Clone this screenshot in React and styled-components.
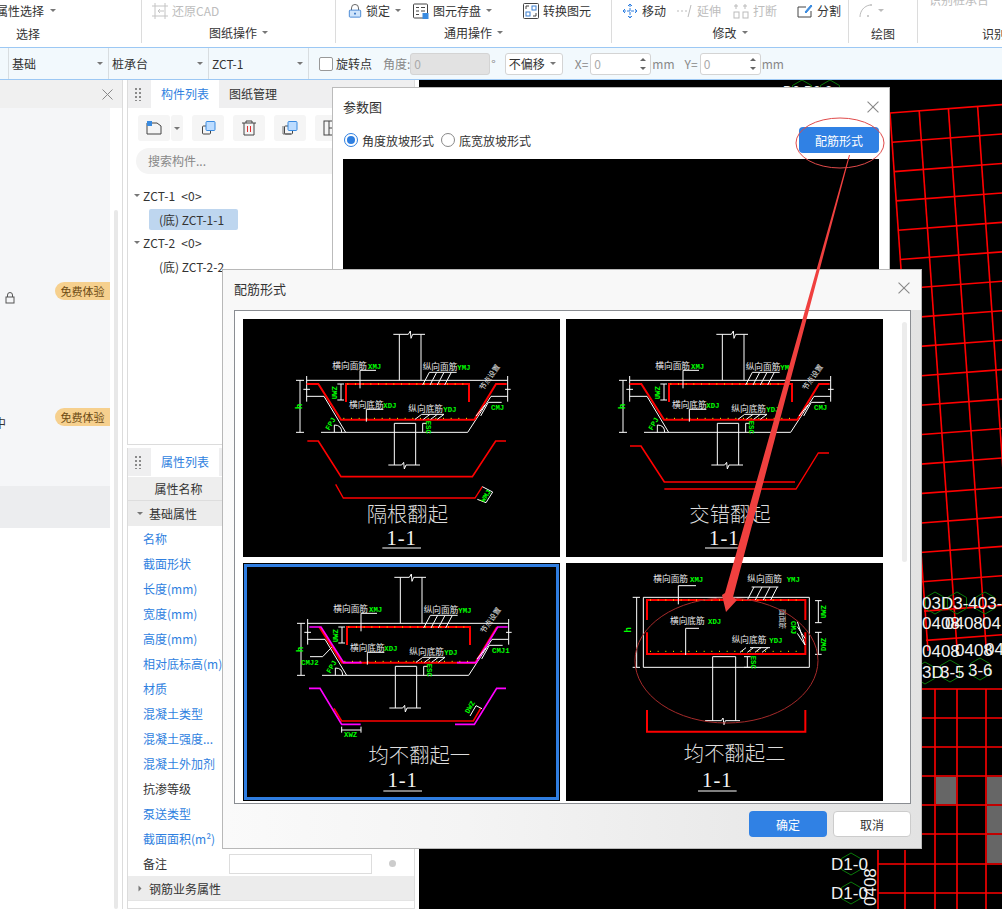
import React from 'react'
import styled, { createGlobalStyle } from 'styled-components'

const GlobalStyle = createGlobalStyle`
  html, body { margin: 0; padding: 0; background: #fff; }
  * { box-sizing: border-box; }
  body { font-family: "Noto Sans CJK SC", "Noto Sans", sans-serif; font-size: 12px; color: #333; }
`

const Page = styled.div`
  position: relative;
  width: 1002px;
  height: 909px;
  overflow: hidden;
  display: flex;
  flex-direction: column;
`

/* ribbon */
const Ribbon = styled.div`
  display: flex;
  height: 47px;
  background: #fff;
  flex: none;
`
const RibbonGroup = styled.div`
  width: ${(p) => p.$w}px;
  flex: none;
  position: relative;
  overflow: hidden;
  height: 43px;
  border-right: ${(p) => (p.$last ? 'none' : '1px solid #dcdcdc')};
  display: flex;
  flex-direction: column;
`
const RibbonRow = styled.div`
  display: flex;
  align-items: center;
  height: 21px;
  flex: none;
`
const Tool = styled.div`
  display: flex;
  align-items: center;
  gap: 4px;
  margin-left: ${(p) => p.$ml || 0}px;
  margin-top: ${(p) => p.$mt || 0}px;
  color: ${(p) => (p.$off ? '#bdbdbd' : '#333')};
  font-size: 12px;
  white-space: nowrap;
`
const GroupLabel = styled.div`
  display: flex;
  align-items: center;
  justify-content: ${(p) => (p.$left ? 'flex-start' : 'center')};
  gap: 5px;
  padding-left: ${(p) => p.$pl || 0}px;
  height: 22px;
  margin-top: ${(p) => p.$mt || 0}px;
  white-space: nowrap;
  color: #333;
`
const Caret = styled.span`
  display: inline-block;
  width: 0;
  height: 0;
  border-left: 3px solid transparent;
  border-right: 3px solid transparent;
  border-top: 3px solid ${(p) => p.$c || '#777'};
  margin-left: ${(p) => p.$ml || 0}px;
  flex: none;
`
const SideCaret = styled(Caret)`
  transform: rotate(-90deg);
`

/* property bar */
const PropBar = styled.div`
  display: flex;
  align-items: center;
  height: 33px;
  flex: none;
  background: #f2f9fd;
  border-top: 1px solid #9cc8f4;
  border-bottom: 1px solid #9cc8f4;
`
const PropCell = styled.div`
  width: ${(p) => p.$w}px;
  flex: none;
  height: 31px;
  display: flex;
  align-items: center;
  justify-content: space-between;
  padding: 0 5px 0 3px;
  border-right: 1px solid #d8dde0;
`
const Check = styled.span`
  width: 14px;
  height: 14px;
  border: 1px solid #999;
  border-radius: 2px;
  background: #fff;
  margin: 0 3px 0 10px;
  flex: none;
`
const PropText = styled.span`
  color: ${(p) => (p.$dim ? '#888' : '#333')};
  margin-left: ${(p) => p.$ml || 0}px;
  white-space: nowrap;
`
const PropInput = styled.div`
  width: ${(p) => p.$w}px;
  height: 22px;
  flex: none;
  border: 1px solid #d4d4d4;
  border-radius: 3px;
  background: ${(p) => (p.$off ? '#e2e2e2' : '#fff')};
  color: #aaa;
  padding-left: 3px;
  margin-left: ${(p) => p.$ml || 0}px;
  display: flex;
  align-items: center;
  justify-content: space-between;
`
const Spin = styled.div`
  display: flex;
  flex-direction: column;
  gap: 6px;
  padding-right: 4px;
`
const SpinUp = styled(Caret)`
  border-top: none;
  border-bottom: 3px solid #666;
`
const SelectBox = styled(PropInput)`
  color: #333;
  background: #fff;
  padding: 0 6px 0 3px;
`

/* work area */
const Work = styled.div`
  flex: 1;
  display: flex;
  min-height: 0;
`
const LeftColumn = styled.div`
  width: 123px;
  flex: none;
  border-right: 1px solid #dcdcdc;
  display: flex;
  flex-direction: column;
`
const LeftHead = styled.div`
  height: 28px;
  background: #f0f0f0;
  flex: none;
  display: flex;
  align-items: center;
  justify-content: flex-end;
  padding-right: 9px;
`
const LeftBody = styled.div`
  flex: 1;
  display: flex;
`
const LeftList = styled.div`
  width: 110px;
  flex: none;
  display: flex;
  flex-direction: column;
`
const LeftRow = styled.div`
  height: 42px;
  flex: none;
  display: flex;
  justify-content: space-between;
  background: ${(p) => (p.$hot ? '#ecedef' : '#f5f6f8')};
  padding-top: 6px;
`
const Badge = styled.span`
  width: 55px;
  height: 18px;
  margin-left: auto;
  background: #f6d08e;
  border-radius: 9px 0 0 9px;
  color: #6c4a12;
  font-size: 11px;
  line-height: 18px;
  text-align: center;
`
const LockMark = styled.span`
  margin: 8px 0 0 4px;
  width: 12px;
  height: 12px;
  flex: none;
`
const Cut = styled.span`
  margin: 6px 0 0 -6px;
`
const Gutter = styled.div`
  flex: 1;
  padding: 102px 4px 0 4px;
`
const Thumb = styled.div`
  height: 100%;
  width: 4px;
  background: #e8e8e8;
  border-radius: 2px;
`

const MiddleColumn = styled.div`
  width: 296px;
  flex: none;
  padding: 0 4px;
  display: flex;
  flex-direction: column;
  gap: 3px;
`
const Panel = styled.div`
  height: ${(p) => (p.$h ? `${p.$h}px` : 'auto')};
  flex: ${(p) => (p.$h ? 'none' : '1')};
  border: 1px solid #dcdcdc;
  border-top: none;
  background: #fff;
  overflow: hidden;
`
const TabBar = styled.div`
  height: 28px;
  background: #efeff0;
  display: flex;
  align-items: center;
  padding-left: 6px;
`
const Grip = styled.div`
  width: 7px;
  height: 14px;
  margin-right: 10px;
  background-image: radial-gradient(#8a8a8a 1px, transparent 1.2px);
  background-size: 4px 4px;
  flex: none;
`
const Tab = styled.div`
  width: ${(p) => (p.$on ? 68 : 48)}px;
  height: 28px;
  line-height: 28px;
  text-align: center;
  background: ${(p) => (p.$on ? '#fff' : 'transparent')};
  color: ${(p) => (p.$on ? '#2f7fe0' : '#333')};
  margin-left: ${(p) => p.$ml || 0}px;
`
const IconBar = styled.div`
  display: flex;
  padding: 7px 0 0 10px;
  gap: 9px;
`
const IconBtn = styled.div`
  width: ${(p) => p.$w || 32}px;
  height: 26px;
  background: #f5f5f5;
  border-radius: 3px;
  display: flex;
  align-items: center;
  justify-content: center;
  flex: none;
  margin-left: ${(p) => p.$ml || 0}px;
`
const Search = styled.div`
  margin: 7px 8px 0 8px;
  height: 26px;
  background: #f4f4f4;
  border-radius: 13px;
  padding-left: 12px;
  line-height: 26px;
  color: #888;
`
const Tree = styled.div`
  padding-top: 9px;
`
const TreeRow = styled.div`
  height: 24px;
  display: flex;
  align-items: center;
  gap: 3px;
  padding-left: 6px;
  letter-spacing: 0.2px;
`
const TreeLeaf = styled.div`
  height: 21px;
  line-height: 21px;
  width: ${(p) => p.$w}px;
  margin: 2px 0 0 21px;
  padding-left: 10px;
  border-radius: 2px;
  background: ${(p) => (p.$on ? '#bed6ef' : 'transparent')};
  white-space: pre;
`
const PropHead = styled.div`
  height: 24px;
  margin-top: 1px;
  width: 101px;
  background: #eee;
  text-align: center;
  line-height: 23px;
  border-bottom: 1px solid #ddd;
`
const SectionRow = styled.div`
  height: 25px;
  background: #ececec;
  display: flex;
  align-items: center;
  gap: 6px;
  padding-left: 9px;
  border-bottom: ${(p) => (p.$line ? '1px solid #e4e4e4' : 'none')};
`
const AttrRow = styled.div`
  height: 25px;
  display: flex;
  align-items: center;
  padding-left: 15px;
  color: ${(p) => (p.$blue ? '#2f7fe0' : '#333')};
  white-space: nowrap;
`
const AttrInput = styled.span`
  width: 143px;
  height: 20px;
  border: 1px solid #ddd;
  margin-left: 62px;
  flex: none;
`
const AttrDot = styled.span`
  width: 7px;
  height: 7px;
  border-radius: 50%;
  background: #ccc;
  margin-left: 17px;
  flex: none;
`
const Canvas = styled.div`
  flex: 1;
  background: #000;
  overflow: hidden;
`
const CanvasSvg = styled.svg`
  display: block;
  width: 583px;
  height: 830px;
`

/* dialogs */
const ParamDialog = styled.div`
  position: absolute;
  left: 332px;
  top: 87px;
  width: 558px;
  height: 600px;
  background: #fff;
  border: 1px solid #bbb;
  padding: 0 10px 0 10px;
`
const DialogHead = styled.div`
  height: ${(p) => p.$h}px;
  display: flex;
  align-items: center;
  justify-content: space-between;
  font-size: 13px;
`
const RadioLine = styled.div`
  display: flex;
  align-items: center;
  height: 30px;
  white-space: nowrap;
`
const Radio = styled.span`
  width: 14px;
  height: 14px;
  border-radius: 50%;
  border: 1px solid ${(p) => (p.$on ? '#2f7fe0' : '#888')};
  margin: ${(p) => p.$m};
  display: flex;
  align-items: center;
  justify-content: center;
  flex: none;
  &::after {
    content: '';
    width: 8px;
    height: 8px;
    border-radius: 50%;
    background: ${(p) => (p.$on ? '#2f7fe0' : 'transparent')};
  }
`
const Primary = styled.div`
  width: ${(p) => p.$w}px;
  height: 26px;
  background: #3081e4;
  color: #fff;
  border-radius: 4px;
  display: flex;
  align-items: center;
  justify-content: center;
  margin-left: ${(p) => p.$ml || 'auto'};
  flex: none;
`
const Blackboard = styled.div`
  height: 400px;
  background: #000;
  margin-top: 4px;
`
const FormDialog = styled.div`
  position: absolute;
  left: 222px;
  top: 269px;
  width: 700px;
  height: 580px;
  border: 1px solid #b8b8b8;
  background: linear-gradient(90deg, #fafafa 0%, #f4f4f4 35%, #e3e3e3 100%);
  display: flex;
  flex-direction: column;
`
const FormHead = styled(DialogHead)`
  background: #f8f8f8;
  padding: 0 11px 4px;
  flex: none;
`
const FormBody = styled.div`
  margin: 0 10px 0 11px;
  height: 494px;
  flex: none;
  background: #fff;
  border: 1px solid #8a8d92;
  display: flex;
  overflow: hidden;
`
const CardGrid = styled.div`
  display: grid;
  grid-template-columns: 317px 317px;
  grid-auto-rows: 238px;
  gap: 6px;
  padding: 8px 0 0 8px;
  flex: none;
  height: 100%;
  overflow: hidden;
`
const Card = styled.div`
  position: relative;
  background: #000;
  &::after {
    content: '';
    display: ${(p) => (p.$on ? 'block' : 'none')};
    position: absolute;
    inset: 1px;
    border: 3px solid #2f7de0;
  }
`
const CardSvg = styled.svg`
  display: block;
  width: 317px;
  height: 238px;
`
const ScrollTrack = styled.div`
  width: 5px;
  height: 240px;
  background: #ececec;
  border-radius: 3px;
  margin: 11px 0 0 19px;
  flex: none;
`
const FormFoot = styled.div`
  display: flex;
  justify-content: flex-end;
  gap: 6px;
  padding: 7px 10px 0 0;
`
const Ghost = styled.div`
  width: 78px;
  height: 26px;
  background: #fff;
  border: 1px solid #ccc;
  border-radius: 4px;
  display: flex;
  align-items: center;
  justify-content: center;
`
const Overlay = styled.svg`
  position: absolute;
  left: 0;
  top: 0;
  width: 1002px;
  height: 909px;
  pointer-events: none;
`

/* icons */
const Close = ({ size = 11, c = '#888' }) => (
  <svg width={size} height={size} viewBox="0 0 11 11">
    <path d="M.5.5l10 10M10.5.5l-10 10" stroke={c} fill="none" />
  </svg>
)
const Ico = ({ children, w = 16, h = 16 }) => (
  <svg width={w} height={h} viewBox="0 0 16 16" fill="none" stroke="#444" strokeWidth="1">
    {children}
  </svg>
)
const LockIcon = () => (
  <Ico w={14}>
    <path d="M4 7V4.5a4 4 0 0 1 8 0V7" stroke="#555" />
    <rect x="1.5" y="7" width="13" height="8" rx="1" fill="#cfe4fb" stroke="#3a7fd0" />
    <path d="M8 10v2" stroke="#2f6fc0" strokeWidth="2" />
  </Ico>
)
const SaveIcon = () => (
  <Ico>
    <rect x=".5" y="1" width="14" height="14" rx="1" />
    <path d="M3 4.5h3M8 4.5h4M3 8h3M8 8h4M3 11.5h3" />
    <rect x="9.5" y="10" width="6" height="6" fill="#3a8be0" stroke="none" />
  </Ico>
)
const ConvertIcon = () => (
  <Ico>
    <rect x=".5" y=".5" width="15" height="15" rx="1" />
    <rect x="3" y="9" width="4" height="4" stroke="#3a7fd0" />
    <rect x="9" y="3" width="4" height="4" stroke="#3a7fd0" />
    <path d="M3 6V3h3M13 10v3h-3" />
  </Ico>
)
const MoveIcon = () => (
  <Ico>
    <path d="M8 1v14M1 8h14M8 1L6 3M8 1l2 2M8 15l-2-2M8 15l2-2M1 8l2-2M1 8l2 2M15 8l-2-2M15 8l-2 2" stroke="#2f7fe0" strokeDasharray="3 1" />
  </Ico>
)
const ExtendIcon = () => (
  <Ico>
    <path d="M0 8h2M4 8h2M8 8h2M14 2l-3 12" stroke="#bbb" />
  </Ico>
)
const BreakIcon = () => (
  <Ico>
    <rect x="1" y="9" width="5" height="6" stroke="#bbb" />
    <rect x="10" y="9" width="5" height="6" stroke="#bbb" />
    <path d="M3 1v5M12 1v5M1 3h4M10 3h4" stroke="#bbb" />
  </Ico>
)
const SplitIcon = () => (
  <Ico>
    <path d="M9 4H1v10h13V8" />
    <path d="M8 9l6-7 1 1-6 7z" fill="#3a8be0" stroke="#3a8be0" />
  </Ico>
)
const ArcIcon = () => (
  <Ico>
    <path d="M2 14C2 8 6 3 12 2" stroke="#bbb" />
    <circle cx="13" cy="2" r="1" fill="#bbb" stroke="none" />
    <circle cx="10" cy="13" r="1" fill="#bbb" stroke="none" />
  </Ico>
)
const RestoreIcon = () => (
  <Ico>
    <path d="M3 0v16M0 3h16M13 0v16M0 13h16M6 8h6M6 8l2-2M6 8l2 2" stroke="#c4c4c4" />
  </Ico>
)
const NewDocIcon = () => (
  <Ico>
    <path d="M1 3h10l4 3v8H1z" />
    <rect x="1" y="1" width="5" height="5" fill="#3a8be0" stroke="none" />
  </Ico>
)
const LayerIcon = ({ stack }) => (
  <Ico>
    {stack && <path d="M1 6v8h8" stroke="#777" />}
    <rect x="2.5" y="6" width="8" height="8" rx="1" />
    <rect x="6" y="1.5" width="9" height="9" rx="1" fill="#bcdcff" stroke="#3a8be0" />
  </Ico>
)
const TrashIcon = () => (
  <Ico>
    <path d="M1 3h14M5 3V1h6v2M3 3v12h10V3" />
    <path d="M6.5 6v6M9.500 6v6" stroke="#e03030" />
  </Ico>
)
const PlanIcon = () => (
  <Ico>
    <rect x="1" y="1" width="14" height="14" />
    <path d="M6 1v14M6 8h9" />
  </Ico>
)

/* cad drawing helpers */
const RED = '#f00'
const MAG = '#f0f'
const GRN = '#0f0'
const CAD_FONT = '"Noto Sans CJK SC", sans-serif'

const Ln = ({ d, c = '#fff', w = 3 }) => <path d={d} fill="none" stroke={c} strokeWidth={w} />
const T = ({ x, y, c = '#e8e8e8', s = 26, r, children, f = CAD_FONT, a, wt, ls }) => (
  <text
    x={x}
    y={y}
    fill={c}
    fontSize={s}
    fontFamily={f}
    fontWeight={wt}
    letterSpacing={ls}
    textAnchor={a}
    transform={r ? `rotate(${r} ${x} ${y})` : undefined}
  >
    {children}
  </text>
)
const G = (props) => <T c={GRN} s={22} wt={700} f='"Liberation Mono", monospace' {...props} />
const Dots = ({ d }) => <path d={d} fill="none" stroke="#ff0" strokeWidth="3" strokeDasharray="3 20" />

const CardTitle = ({ cx, y, numX, numY, lineY, children }) => (
  <>
    <T x={cx} y={y} s={61} a="middle" c="#dcdcdc" wt={300}>{children}</T>
    <T x={numX} y={numY} s={62} a="middle" c="#f4f4f4" ls={3} f='"Liberation Serif", serif'>1-1</T>
    <Ln d={`M${numX - 58} ${lineY}H${numX + 58}`} />
  </>
)

// the footing section shared by three of the cards
const Footing = ({ dx, dy, magenta, cmj = 'CMJ' }) => (
  <g transform={`translate(${dx} ${dy})`}>
    <Ln d="M478 211V73M543 211V73M460 73H505l6-10 2 22 5-12H555" />
    <Ln d="M200 198V275M200 211H803M803 198V275M200 259H252L317 367M243 367H683L753 259M753 259H803" />
    <Ln d="M190 238H210M795 238H812" />
    <Ln d="M180 211V367M168 211H192M168 367H192" />
    <Ln d={magenta ? 'M235 222L303 329H703L768 222' : 'M200 222H235L303 329H703L768 222H800'} c={RED} w={6} />
    {magenta && <Ln d="M205 222H240L308 329H362M648 329H705L770 222H800" c={MAG} w={5} />}
    <Ln d="M318 276V222H687V276" c={RED} w={6} />
    <Dots d="M322 222H685" />
    <Dots d="M310 325H700" />
    <Ln d="M303 222V270M292 222H312M292 270H312" />
    <G x={292} y={268} r={-90}>UWZ</G>
    <G x={186} y={298} r={-90} s={28}>h</G>
    <T x={277} y={177}>横向面筋</T>
    <G x={384} y={177}>XMJ</G>
    <Ln d="M360 235V181H408" />
    <T x={548} y={180}>纵向面筋</T>
    <G x={652} y={180}>YMJ</G>
    <Ln d="M568 187H650M548 225L568 187M570 225L590 187M592 225L612 187M614 225L634 187" />
    <T x={327} y={293}>横向底筋</T>
    <G x={430} y={293}>XDJ</G>
    <Ln d="M379 335V298H430" />
    <T x={505} y={305}>纵向底筋</T>
    <G x={610} y={305}>YDJ</G>
    <Ln d="M545 313H612M525 328L545 313M550 328L570 313M572 328L592 313M592 328L612 313" />
    <Ln d="M463 465V340H527V465M445 465H485l6-8 2 20 5-12H540" />
    <Ln d="M548 340V367M548 340H560" />
    <G x={558} y={332} r={90}>ESC</G>
    <G x={268} y={362} r={-60}>FPJ</G>
    <Ln d="M283 367V345M283 345Q305 345 305 367" />
    <G x={753} y={301}>{cmj}</G>
    <Ln d="M745 277H785M722 318L745 277M708 318L735 285" />
    <T x={730} y={242} r={-55} s={22}>节点设置</T>
  </g>
)

const Card1 = () => (
  <CardSvg viewBox="9 27 951 714">
    <Footing dx={0} dy={0} />
    <Ln d="M202 393H235L303 500H697L767 393H798" c={RED} w={5} />
    <Ln d="M287 523L310 564H705L727 530" c={RED} w={4} />
    <Ln d="M727 530L758 546L738 578L712 568" />
    <G x={733} y={578} r={-58}>WMJ</G>
    <CardTitle cx={502} y={635} numX={485} numY={704} lineY={714}>隔根翻起</CardTitle>
  </CardSvg>
)
const Card2 = () => (
  <CardSvg viewBox="18 27 951 714">
    <Footing dx={9} dy={0} />
    <Ln d="M210 408H243L313 516H705" c={RED} w={5} />
    <Ln d="M313 537H708L775 429H807" c={RED} w={4} />
    <CardTitle cx={510} y={635} numX={493} numY={704} lineY={714}>交错翻起</CardTitle>
  </CardSvg>
)
const Card3 = () => (
  <CardSvg viewBox="9 9 951 714">
    <Footing dx={3} dy={-21} magenta cmj="CMJ1" />
    <G x={183} y={316}>CMJ2</G>
    <Ln d="M210 290H248L275 262" />
    <Ln d="M282 445L305 483H700L722 445" c={RED} w={5} />
    <Ln d="M207 385H240L305 493H362M645 493H703L770 385H798" c={MAG} w={5} />
    <Ln d="M305 500V518M363 500V518M305 510H363" />
    <G x={312} y={532}>XWZ</G>
    <G x={686} y={462} r={-60}>DWZ</G>
    <Ln d="M690 468L708 437L726 446" />
    <CardTitle cx={538} y={610} numX={488} numY={680} lineY={693}>均不翻起一</CardTitle>
  </CardSvg>
)
const Card4 = () => (
  <CardSvg viewBox="18 24 951 714">
    <Ln d="M250 127H748V337H250Z" />
    <Ln d="M261 195V135H736V195M261 232V297H736V232" c={RED} w={6} />
    <Dots d="M270 135H730" />
    <Dots d="M270 289H730" />
    <Ln d="M230 127V337M218 127H240M218 337H240" />
    <G x={212} y={233} r={-90} s={28}>h</G>
    <T x={280} y={80}>横向面筋</T>
    <G x={390} y={80}>XMJ</G>
    <Ln d="M355 148V92H408" />
    <T x={562} y={82}>纵向面筋</T>
    <G x={680} y={82}>YMJ</G>
    <Ln d="M575 96H655M562 135L582 96M586 135L606 96M610 135L630 96M632 135L652 96" />
    <T x={330} y={208}>横向底筋</T>
    <G x={444} y={208}>XDJ</G>
    <Ln d="M377 300V220H417" />
    <T x={515} y={265}>纵向底筋</T>
    <G x={628} y={265}>YDJ</G>
    <Ln d="M570 278H630M540 292L558 278M562 292L580 278M585 292L603 278M606 292L624 278" />
    <T x={660} y={162} r={90} s={20}>面面筋</T>
    <G x={692} y={198} r={90}>CMJ</G>
    <Ln d="M712 200L735 270M712 215L735 250M712 235L735 270" />
    <Ln d="M458 497V305H527V497M435 497H484l5-8 3 20 4-12H540" />
    <Ln d="M562 305V337M552 305H572M552 337H572" />
    <G x={574} y={302} r={90}>ESC</G>
    <Ln d="M775 137V203M765 137H785M765 203H785M775 232V298M765 232H785M765 298H785" />
    <G x={797} y={190} r={-90}>UWZ</G>
    <G x={797} y={288} r={-90}>DWZ</G>
    <Ln d="M261 465V530H736V465" c={RED} w={6} />
    <CardTitle cx={524} y={617} numX={472} numY={695} lineY={708}>均不翻起二</CardTitle>
  </CardSvg>
)

/* background model on the canvas */
const skewRows = Array.from({ length: 19 }, (_, i) => i)
const skewCols = Array.from({ length: 5 }, (_, i) => i)
const gridX = [878, 905, 935, 957, 986]
const gridY = [688, 717, 746, 775, 804, 833, 863, 892]
const Hex = ({ x, y, r = 11 }) => (
  <polygon
    fill="none"
    stroke="#0a7a0a"
    points={[0, 1, 2, 3, 4, 5]
      .map((i) => `${x + r * Math.sin((i * Math.PI) / 3)},${y + r * Math.cos((i * Math.PI) / 3)}`)
      .join(' ')}
  />
)
const ModelText = ({ x, y, s = 17, children, r }) => (
  <text
    x={x}
    y={y}
    fontSize={s}
    fill="#f2f2f2"
    fontFamily='"Liberation Sans", sans-serif'
    transform={r ? `rotate(${r} ${x} ${y})` : undefined}
  >
    {children}
  </text>
)

const CanvasModel = () => (
  <CanvasSvg viewBox="419 79 583 830">
    {skewRows.map((i) => (
      <line key={i} x1={890 + i * 2} y1={112 + i * 29.3} x2={1010} y2={112 + i * 29.3 - (120 - i * 2) * 0.075} stroke={RED} strokeWidth="1.6" />
    ))}
    {skewCols.map((j) => (
      <line key={j} x1={890 + j * 29.2} y1={112 - j * 2.2} x2={890 + j * 29.2 + 38} y2={650} stroke={RED} strokeWidth="1.6" />
    ))}
    {gridX.map((x) => (
      <line key={x} x1={x} y1={x < 922 ? 849 : 688} x2={x} y2={909} stroke={RED} strokeWidth="1.6" />
    ))}
    {gridY.map((y) => (
      <line key={y} x1={878} y1={y} x2={1002} y2={y} stroke={RED} strokeWidth="1.6" />
    ))}
    <rect x="936" y="776" width="20" height="27" fill="#666" />
    <rect x="987" y="776" width="15" height="27" fill="#666" />
    <rect x="987" y="805" width="15" height="27" fill="#666" />
    <rect x="987" y="834" width="15" height="28" fill="#666" />
    <Hex x={802} y={90} />
    <Hex x={830} y={90} />
    <ModelText x={783} y={94} s={13}>D3-D3-2</ModelText>
    <Hex x={935} y={602} />
    <Hex x={957} y={602} />
    <Hex x={985} y={602} />
    <Hex x={925} y={672} />
    <Hex x={950} y={670} />
    <Hex x={980} y={668} />
    <ModelText x={922} y={608}>03D3-403-E</ModelText>
    <ModelText x={922} y={628}>0408</ModelText>
    <ModelText x={945} y={628}>0408</ModelText>
    <ModelText x={982} y={628}>04</ModelText>
    <ModelText x={922} y={656}>0408</ModelText>
    <ModelText x={955} y={655}>0408</ModelText>
    <ModelText x={985} y={654}>040</ModelText>
    <ModelText x={922} y={677}>3D</ModelText>
    <ModelText x={940} y={677}>3-5</ModelText>
    <ModelText x={968} y={675}>3-6</ModelText>
    <Hex x={851} y={863} />
    <Hex x={851} y={892} />
    <ModelText x={831} y={869}>D1-0</ModelText>
    <ModelText x={831} y={898}>D1-0</ModelText>
    <ModelText x={876} y={905} r={-90}>0408</ModelText>
    <ModelText x={876} y={950} r={-90}>0408</ModelText>
  </CanvasSvg>
)

const attrs = [
  ['名称', 1],
  ['截面形状', 1],
  ['长度(mm)', 1],
  ['宽度(mm)', 1],
  ['高度(mm)', 1],
  ['相对底标高(m)', 1],
  ['材质', 1],
  ['混凝土类型', 1],
  ['混凝土强度...', 1],
  ['混凝土外加剂', 1],
  ['抗渗等级', 0],
  ['泵送类型', 1],
  ['截面面积(m²)', 1],
]

export default function App() {
  return (
    <>
      <GlobalStyle />
      <Page>
        <Ribbon>
          <RibbonGroup $w={142}>
            <RibbonRow>
              <Tool $ml={-4}>属性选择<Caret $ml={2} /></Tool>
            </RibbonRow>
            <GroupLabel $left $pl={16} $mt={3}>选择</GroupLabel>
          </RibbonGroup>
          <RibbonGroup $w={194}>
            <RibbonRow>
              <Tool $ml={10} $off><RestoreIcon />还原CAD</Tool>
            </RibbonRow>
            <GroupLabel>图纸操作<Caret /></GroupLabel>
          </RibbonGroup>
          <RibbonGroup $w={276}>
            <RibbonRow>
              <Tool $ml={12}><LockIcon />锁定<Caret $ml={1} /></Tool>
              <Tool $ml={12}><SaveIcon />图元存盘<Caret $ml={1} /></Tool>
              <Tool $ml={31}><ConvertIcon />转换图元</Tool>
            </RibbonRow>
            <GroupLabel>通用操作<Caret /></GroupLabel>
          </RibbonGroup>
          <RibbonGroup $w={237}>
            <RibbonRow>
              <Tool $ml={10}><MoveIcon />移动</Tool>
              <Tool $ml={11} $off><ExtendIcon />延伸</Tool>
              <Tool $ml={12} $off><BreakIcon />打断</Tool>
              <Tool $ml={20}><SplitIcon />分割</Tool>
            </RibbonRow>
            <GroupLabel>修改<Caret /></GroupLabel>
          </RibbonGroup>
          <RibbonGroup $w={69}>
            <RibbonRow>
              <Tool $ml={9} $off><ArcIcon /><Caret $c="#bbb" /></Tool>
            </RibbonRow>
            <GroupLabel $mt={3}>绘图</GroupLabel>
          </RibbonGroup>
          <RibbonGroup $w={84} $last>
            <RibbonRow>
              <Tool $ml={11} $mt={-22} $off>识别桩承台</Tool>
            </RibbonRow>
            <GroupLabel $left $pl={64} $mt={3}>识别</GroupLabel>
          </RibbonGroup>
        </Ribbon>

        <PropBar>
          <PropCell $w={9}><span /></PropCell>
          <PropCell $w={100}>基础<Caret /></PropCell>
          <PropCell $w={100}>桩承台<Caret /></PropCell>
          <PropCell $w={100}>ZCT-1<Caret /></PropCell>
          <Check />
          <PropText>旋转点</PropText>
          <PropText $dim $ml={11}>角度:</PropText>
          <PropInput $w={80} $off>0</PropInput>
          <PropText $dim $ml={1}>°</PropText>
          <SelectBox $w={58} $ml={9}>不偏移<Caret /></SelectBox>
          <PropText $dim $ml={12}>X=</PropText>
          <PropInput $w={61} $ml={2}>0<Spin><SpinUp /><Caret $c="#666" /></Spin></PropInput>
          <PropText $dim $ml={1}>mm</PropText>
          <PropText $dim $ml={10}>Y=</PropText>
          <PropInput $w={61} $ml={2}>0<Spin><SpinUp /><Caret $c="#666" /></Spin></PropInput>
          <PropText $dim $ml={1}>mm</PropText>
        </PropBar>

        <Work>
          <LeftColumn>
            <LeftHead><Close /></LeftHead>
            <LeftBody>
              <LeftList>
                {[0, 1, 2, 3].map((i) => <LeftRow key={i} />)}
                <LeftRow>
                  <LockMark>
                    <svg width="12" height="12" viewBox="0 0 12 12" fill="none" stroke="#555">
                      <path d="M3.5 5V3a2.5 2.5 0 0 1 5 0v2" />
                      <rect x="2" y="5" width="8" height="6" />
                    </svg>
                  </LockMark>
                  <Badge>免费体验</Badge>
                </LeftRow>
                {[5, 6].map((i) => <LeftRow key={i} />)}
                <LeftRow>
                  <Cut>中</Cut>
                  <Badge>免费体验</Badge>
                </LeftRow>
                <LeftRow />
                <LeftRow $hot />
              </LeftList>
              <Gutter><Thumb /></Gutter>
            </LeftBody>
          </LeftColumn>

          <MiddleColumn>
            <Panel $h={365}>
              <TabBar>
                <Grip />
                <Tab $on>构件列表</Tab>
                <Tab $ml={10}>图纸管理</Tab>
              </TabBar>
              <IconBar>
                <IconBtn><NewDocIcon /></IconBtn>
                <IconBtn $w={12} $ml={-8}><Caret /></IconBtn>
                <IconBtn><LayerIcon /></IconBtn>
                <IconBtn><TrashIcon /></IconBtn>
                <IconBtn><LayerIcon stack /></IconBtn>
                <IconBtn><PlanIcon /></IconBtn>
              </IconBar>
              <Search>搜索构件...</Search>
              <Tree>
                <TreeRow><Caret />ZCT-1&nbsp; &lt;0&gt;</TreeRow>
                <TreeLeaf $on $w={89}>(底) ZCT-1-1</TreeLeaf>
                <TreeRow><Caret />ZCT-2&nbsp; &lt;0&gt;</TreeRow>
                <TreeLeaf $w={120}>(底) ZCT-2-2</TreeLeaf>
              </Tree>
            </Panel>
            <Panel>
              <TabBar>
                <Grip />
                <Tab $on>属性列表</Tab>
              </TabBar>
              <PropHead>属性名称</PropHead>
              <SectionRow><Caret />基础属性</SectionRow>
              {attrs.map(([name, blue]) => (
                <AttrRow key={name} $blue={blue}>{name}</AttrRow>
              ))}
              <AttrRow>备注<AttrInput /><AttrDot /></AttrRow>
              <SectionRow $line>
                <SideCaret />钢筋业务属性
              </SectionRow>
            </Panel>
          </MiddleColumn>

          <Canvas><CanvasModel /></Canvas>
        </Work>

        <ParamDialog>
          <DialogHead $h={37}>
            参数图
            <Close size={12} />
          </DialogHead>
          <RadioLine>
            <Radio $on $m="0 4px 0 1px" />
            角度放坡形式
            <Radio $m="0 4px 0 7px" />
            底宽放坡形式
            <Primary $w={80}>配筋形式</Primary>
          </RadioLine>
          <Blackboard />
        </ParamDialog>

        <FormDialog>
          <FormHead $h={40}>
            配筋形式
            <Close size={12} />
          </FormHead>
          <FormBody>
            <CardGrid>
              <Card><Card1 /></Card>
              <Card><Card2 /></Card>
              <Card $on><Card3 /></Card>
              <Card><Card4 /></Card>
            </CardGrid>
            <ScrollTrack />
          </FormBody>
          <FormFoot>
            <Primary $w={78}>确定</Primary>
            <Ghost>取消</Ghost>
          </FormFoot>
        </FormDialog>

        <Overlay viewBox="0 0 1002 909">
          <ellipse cx="840" cy="143" rx="44" ry="25" fill="none" stroke="#e04a4a" />
          <ellipse cx="726.5" cy="660.5" rx="91.5" ry="62.5" fill="none" stroke="#a52a2a" />
          <polygon points="850,155 733,597 737,600 726,612 722,595 725,593 849,155" fill="#f0403f" />
        </Overlay>
      </Page>
    </>
  )
}
